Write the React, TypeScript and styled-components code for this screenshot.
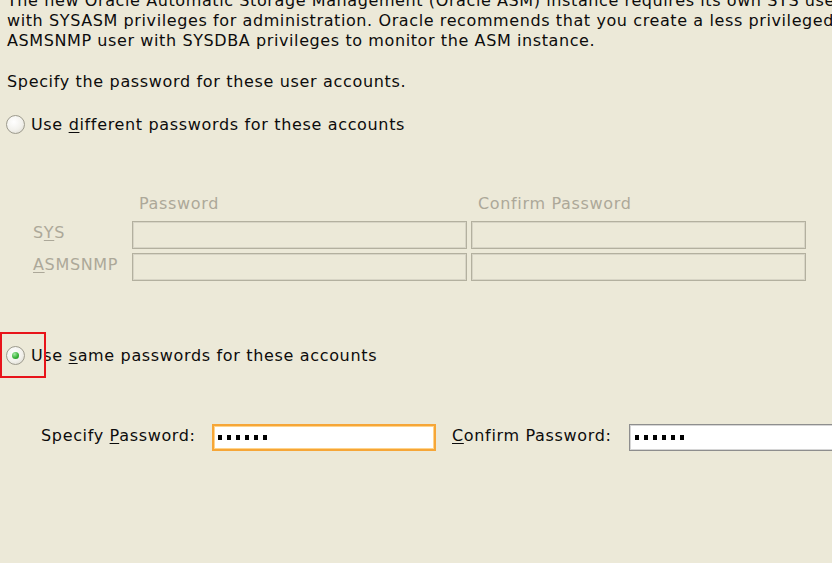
import React from "react";
import styled, { createGlobalStyle } from "styled-components";

const GlobalStyle = createGlobalStyle`
  html, body {
    margin: 0;
    padding: 0;
    background: #ece9d8;
    overflow: hidden;
  }
  body {
    font-family: "DejaVu Sans", Verdana, sans-serif;
    font-size: 16px;
    letter-spacing: 0.66px;
    color: #0c0c0c;
  }
`;

const Page = styled.div`
  width: 832px;
  height: 563px;
  padding-left: 7px;
  box-sizing: border-box;
  overflow: hidden;
`;

const Intro = styled.div`
  margin-top: -9px;
  line-height: 20px;
  letter-spacing: 0.6px;
  white-space: nowrap;
`;

const Prompt = styled.div`
  margin-top: 21px;
  line-height: 20px;
  white-space: nowrap;
`;

const RadioRow = styled.div<{ $top: number }>`
  position: relative;
  display: flex;
  align-items: center;
  gap: 6px;
  height: 20px;
  margin-top: ${(p) => p.$top}px;
  margin-left: -1px;
  white-space: nowrap;
`;

const Radio = styled.span<{ $checked?: boolean }>`
  position: relative;
  width: 19px;
  height: 19px;
  box-sizing: border-box;
  border-radius: 50%;
  border: 1px solid #9d9b8e;
  background: radial-gradient(circle at 40% 35%, #ffffff 0%, #f2f1ec 55%, #d6d4c9 100%);
  flex: none;

  &::after {
    content: "";
    display: ${(p) => (p.$checked ? "block" : "none")};
    position: absolute;
    left: 5px;
    top: 5px;
    width: 7px;
    height: 7px;
    border-radius: 50%;
    background: radial-gradient(circle at 35% 30%, #a4eaa4 0%, #3cb43c 55%, #178a17 100%);
  }
`;

const Mnemonic = styled.u`
  text-decoration: underline;
  text-underline-offset: 2px;
  text-decoration-thickness: 1px;
`;

const Highlight = styled.span`
  position: absolute;
  left: -6px;
  top: -13px;
  width: 46px;
  height: 46px;
  box-sizing: border-box;
  border: 2px solid #e8141a;
  pointer-events: none;
`;

const AccountsGrid = styled.div`
  display: grid;
  grid-template-columns: 95px 335px 335px;
  column-gap: 4px;
  row-gap: 4px;
  margin-top: 60px;
  margin-left: 26px;
  color: #aca899;
  white-space: nowrap;
`;

const ColumnHeader = styled.div`
  line-height: 20px;
  padding-left: 7px;
  margin-bottom: 3px;
`;

const AccountLabel = styled.div`
  display: flex;
  align-items: center;
  padding-bottom: 5px;
`;

const DisabledField = styled.div`
  height: 28px;
  box-sizing: border-box;
  border: 1px solid #b3b09f;
  box-shadow: inset 0 0 0 1px #d8d5c6;
`;

const PasswordRow = styled.div`
  display: flex;
  align-items: center;
  margin-top: 59px;
  padding-left: 34px;
  white-space: nowrap;
`;

const FieldLabel = styled.div<{ $width: number }>`
  width: ${(p) => p.$width}px;
  flex: none;
  padding-bottom: 4px;
`;

const PasswordField = styled.div<{ $width: number; $focused?: boolean }>`
  width: ${(p) => p.$width}px;
  height: 27px;
  flex: none;
  box-sizing: border-box;
  background: #fff;
  display: flex;
  align-items: center;
  gap: 5px;
  padding-left: ${(p) => (p.$focused ? 4 : 5)}px;
  border: ${(p) => (p.$focused ? "2px solid #f6a637" : "1px solid #8e8e8e")};
  box-shadow: ${(p) => (p.$focused ? "inset 0 0 0 1px #ffd48c" : "inset 0 0 0 1px #d6d6d6")};
  margin-right: 16px;
`;

const Dot = styled.span`
  width: 4px;
  height: 5px;
  background: #000;
  flex: none;
`;

function Masked({ count }: { count: number }) {
  return (
    <>
      {Array.from({ length: count }).map((_, i) => (
        <Dot key={i} />
      ))}
    </>
  );
}

export default function App() {
  return (
    <Page>
      <GlobalStyle />

      <Intro>
        <div>The new Oracle Automatic Storage Management (Oracle ASM) instance requires its own SYS user</div>
        <div>with SYSASM privileges for administration. Oracle recommends that you create a less privileged</div>
        <div>ASMSNMP user with SYSDBA privileges to monitor the ASM instance.</div>
      </Intro>

      <Prompt>Specify the password for these user accounts.</Prompt>

      <RadioRow $top={22}>
        <Radio />
        <span>
          Use <Mnemonic>d</Mnemonic>ifferent passwords for these accounts
        </span>
      </RadioRow>

      <AccountsGrid>
        <div />
        <ColumnHeader>Password</ColumnHeader>
        <ColumnHeader>Confirm Password</ColumnHeader>

        <AccountLabel>
          S<Mnemonic>Y</Mnemonic>S
        </AccountLabel>
        <DisabledField />
        <DisabledField />

        <AccountLabel>
          <Mnemonic>A</Mnemonic>SMSNMP
        </AccountLabel>
        <DisabledField />
        <DisabledField />
      </AccountsGrid>

      <RadioRow $top={64}>
        <Radio $checked />
        <span>
          Use <Mnemonic>s</Mnemonic>ame passwords for these accounts
        </span>
        <Highlight />
      </RadioRow>

      <PasswordRow>
        <FieldLabel $width={171}>
          Specify <Mnemonic>P</Mnemonic>assword:
        </FieldLabel>
        <PasswordField $width={224} $focused>
          <Masked count={6} />
        </PasswordField>
        <FieldLabel $width={177}>
          <Mnemonic>C</Mnemonic>onfirm Password:
        </FieldLabel>
        <PasswordField $width={230}>
          <Masked count={6} />
        </PasswordField>
      </PasswordRow>
    </Page>
  );
}
